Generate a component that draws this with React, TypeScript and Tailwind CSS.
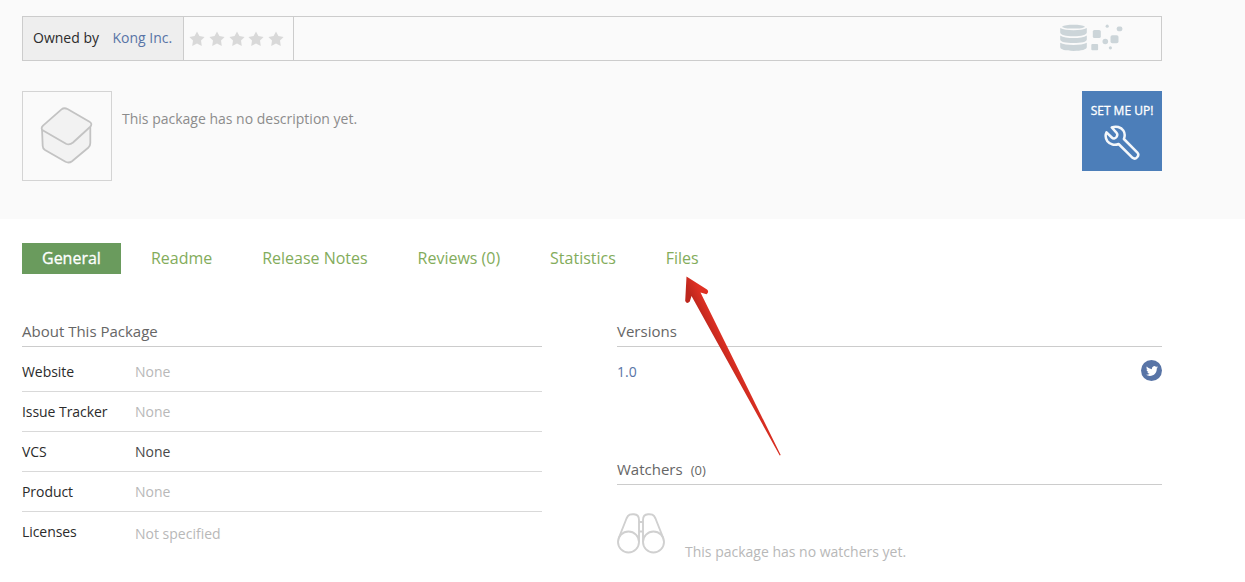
import type { ReactNode } from "react";

const tabs = ["Readme", "Release Notes", "Reviews (0)", "Statistics", "Files"];

const details = [
  { label: "Website", value: "None", tone: "text-[#b8b8b8]" },
  { label: "Issue Tracker", value: "None", tone: "text-[#b8b8b8]" },
  { label: "VCS", value: "None", tone: "text-[#484848]" },
  { label: "Product", value: "None", tone: "text-[#b8b8b8]" },
  { label: "Licenses", value: "Not specified", tone: "text-[#b8b8b8] pt-0.5" },
];

function Star() {
  return (
    <svg width="16" height="16" viewBox="0 0 16 16" fill="#d9d9d9" className="shrink-0">
      <path d="M8 .4 10.400 5.100 15.600 5.900 12 9.600 12.800 14.900 8 12.600 3.200 14.900 4 9.600.4 5.900 5.600 5.100Z" />
    </svg>
  );
}

function DataIcon() {
  return (
    <svg width="64" height="28" viewBox="0 0 64 28" fill="#ccd5d9">
      <path d="M2 2.700C4 1.200 8 .7 13.500 .7S23 1.200 25 2.700C24 4 19 4.600 13.500 4.600S3 4 2 2.700Z" />
      <path d="M.2 4C3 5.700 8 6.200 13.500 6.200S24 5.700 26.800 4V8.500C26.800 10.900 21.500 12.200 13.500 12.200S.2 10.900.2 8.500Z" />
      <path d="M.2 11.500C3 13.400 8 14 13.500 14S24 13.400 26.800 11.500V15.500C26.800 17.900 21.500 19.100 13.500 19.100S.2 17.900.2 15.500Z" />
      <path d="M.2 18.800C3 20.400 8 21 13.500 21S24 20.400 26.800 18.800V23C26.800 25.500 21.500 26.900 13.500 26.900S.2 25.500.2 23Z" />
      <rect x="32.800" y="6" width="8" height="8" rx="1.600" />
      <rect x="31.300" y="20" width="6.800" height="6.300" rx="1" />
      <rect x="50.500" y="11.300" width="8" height="8" rx="1.800" />
      <circle cx="45.300" cy="17.500" r="2.800" />
      <rect x="56.800" y="2.500" width="5.500" height="4.800" rx="1.800" />
      <circle cx="47.200" cy="2.200" r="1.600" />
      <circle cx="50.400" cy="23.800" r="1.600" />
    </svg>
  );
}

function PackageIcon() {
  return (
    <svg width="88" height="88" viewBox="0 0 88 88" fill="#f2f2f2" stroke="#c3c3c3" strokeWidth="1.800" strokeLinejoin="round">
      <path d="M19 36.500 19.700 54Q19.700 56.500 22 58L42.500 69.800Q46 71.500 49 69.200L65.500 55.500Q67.300 53.500 67.300 51V34Z" />
      <path d="M38.500 17.400Q41 15.300 44.500 17L66.500 29.800Q70 32 67 35L50 50.500Q46.500 53.500 43 51.800L20.500 38.800Q17 36.800 20 33.600Z" />
    </svg>
  );
}

function WrenchIcon() {
  return (
    <svg width="36" height="36" viewBox="0 0 36 36" fill="none" stroke="#f4f7fa" strokeWidth="2.500" strokeLinejoin="round">
      <path d="M7.800 2.500C12 .7 17 1.900 19.400 5.700C21 8.200 21 11.200 19.900 14L33.400 27.700C36 30.500 31.700 35.300 28.600 32.800L14.600 19C10.700 20.700 6 19.600 3.400 16.200C1.400 13.300 1.200 10 2.500 7.300L7.800 12.500C9.300 14 11.200 13.500 12.300 12.200C13.500 10.700 13.600 9 12.400 7.700Z" />
    </svg>
  );
}

function TwitterBadge() {
  return (
    <span className="flex size-[21px] items-center justify-center rounded-full bg-[#5874a6]">
      <svg width="12" height="12" viewBox="0 0 24 24" fill="#fff">
        <path d="M23.950 4.570a10 10 0 0 1-2.820.77 4.960 4.960 0 0 0 2.160-2.720c-.95.550-2 .96-3.130 1.180a4.920 4.920 0 0 0-8.380 4.480C7.690 8.100 4.070 6.130 1.640 3.160a4.820 4.820 0 0 0-.67 2.480c0 1.710.87 3.210 2.190 4.100a4.900 4.900 0 0 1-2.230-.62v.06a4.920 4.920 0 0 0 3.950 4.830 5 5 0 0 1-2.210.08 4.940 4.940 0 0 0 4.600 3.420A9.870 9.870 0 0 1 0 19.540a14 14 0 0 0 7.550 2.210c9.050 0 14-7.500 14-13.980 0-.21 0-.42-.02-.63a9.940 9.940 0 0 0 2.460-2.550z" />
      </svg>
    </span>
  );
}

function BinocularsIcon() {
  return (
    <svg width="48" height="42" viewBox="0 0 48 42" fill="none" stroke="#d0d0d0" strokeWidth="1.900">
      <circle cx="11.500" cy="29" r="10.500" />
      <circle cx="36.500" cy="29" r="10.500" />
      <path d="M1.600 25.500 9.500 5.500C11.500.9 14 1.200 17 1.300C20.500 1.500 22 3.700 22 7V29" />
      <path d="M46.400 25.500 38.500 5.500C36.500.9 34 1.200 31 1.300C27.500 1.500 26 3.700 26 7V29" />
      <path d="M22 9H26M22 18.500H26" />
    </svg>
  );
}

function Heading({ children }: { children: ReactNode }) {
  return <h2 className="flex h-[30px] items-start border-b border-[#ccc] text-[15px] leading-[28px] text-[#666]">{children}</h2>;
}

export default function App() {
  return (
    <div className="relative h-[582px] w-[1245px] overflow-hidden bg-white font-['Open_Sans',sans-serif] text-sm text-[#2b2b2b]">
      <header className="h-[219px] bg-[#fafafa] pt-4 pl-[22px]">
        <div className="flex h-[45px] w-[1140px] border border-[#ccc]">
          <div className="flex w-[161px] items-center gap-[13.500px] border-r border-[#ccc] bg-[#eee] pb-0.5 pl-2.5 whitespace-nowrap">
            <span>Owned by</span>
            <a className="text-[#5874a6]">Kong Inc.</a>
          </div>
          <div className="flex w-[110px] items-center gap-[3.800px] border-r border-[#ccc] pl-[5px]">
            <Star />
            <Star />
            <Star />
            <Star />
            <Star />
          </div>
          <div className="ml-auto flex items-start pt-[7px] pr-[37px]">
            <DataIcon />
          </div>
        </div>
        <div className="mt-[30px] flex w-[1140px] items-start">
          <div className="size-[90px] border border-[#d4d4d4]">
            <PackageIcon />
          </div>
          <p className="ml-2.5 pt-[18px] leading-5 text-[#8c8c8c]">This package has no description yet.</p>
          <button className="ml-auto flex size-20 flex-col items-center bg-[#4c7eb9] pt-[11px] text-xs leading-[18px] text-white [-webkit-text-stroke:0.300px_white]">
            SET ME UP!
            <span className="mt-[5px]">
              <WrenchIcon />
            </span>
          </button>
        </div>
      </header>

      <nav className="mt-6 ml-[22px] flex h-[31px] gap-2.5 text-base leading-[30px] text-[#83ac5b]">
        <a className="w-[99px] bg-[#6a9b5d] pl-5 text-white [-webkit-text-stroke:0.300px_white]">General</a>
        {tabs.map((tab) => (
          <a key={tab} className="px-[19.950px]">
            {tab}
          </a>
        ))}
      </nav>

      <main className="mt-[43px] ml-[22px] flex w-[1140px] justify-between">
        <section className="w-[520px]">
          <Heading>About This Package</Heading>
          <dl className="pt-[5px]">
            {details.map(({ label, value, tone }) => (
              <div key={label} className="flex h-10 border-b border-[#d9d9d9] leading-10 last:border-b-0">
                <dt className="w-[113px] tracking-[-0.060px]">{label}</dt>
                <dd className={tone}>{value}</dd>
              </div>
            ))}
          </dl>
        </section>
        <section className="w-[545px]">
          <Heading>Versions</Heading>
          <div className="flex h-[108px] items-start justify-between pt-[13px]">
            <a className="pt-0.5 leading-5 text-[#5874a6]">1.0</a>
            <TwitterBadge />
          </div>
          <Heading>
            Watchers<span className="ml-2 pt-px text-[13px]">(0)</span>
          </Heading>
          <div className="flex items-start gap-5 pt-7">
            <BinocularsIcon />
            <p className="pt-[29px] leading-5 text-[#b8b8b8]">This package has no watchers yet.</p>
          </div>
        </section>
      </main>

      <svg className="absolute top-[272px] left-[680px]" width="106" height="188" viewBox="680 272 106 188">
        <defs>
          <linearGradient id="arrow-red" gradientUnits="userSpaceOnUse" x1="719" y1="353" x2="729" y2="348">
            <stop stopColor="#bd271d" />
            <stop offset="1" stopColor="#df3023" />
          </linearGradient>
        </defs>
        <path d="M686.500 276.500 707 289.500Q709.500 292 706.500 294.200L700.500 292.500 780.700 455 779.700 455.500 691.500 296 689.800 301.500Q687 304.500 685.200 301Z" fill="url(#arrow-red)" />
      </svg>
    </div>
  );
}
